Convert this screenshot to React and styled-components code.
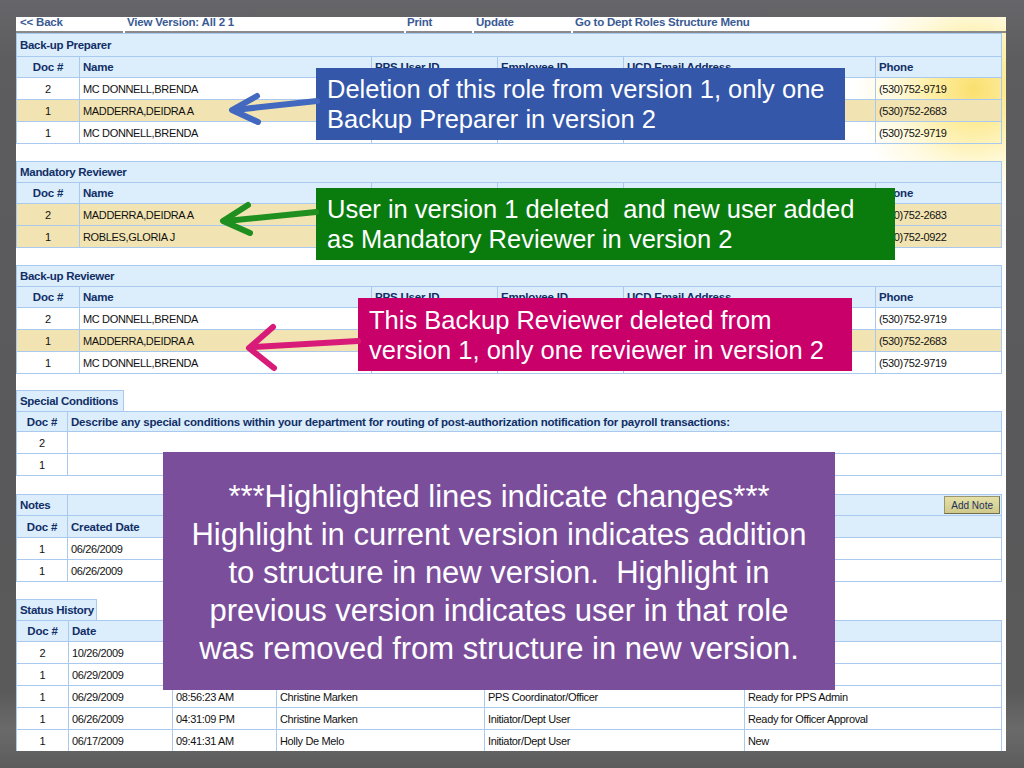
import React from 'react';
import styled, { createGlobalStyle } from 'styled-components';

const Global = createGlobalStyle`
  html, body { margin: 0; padding: 0; }
  body {
    width: 1024px; height: 768px; overflow: hidden;
    background: linear-gradient(180deg, #666569 0%, #5d5d5f 8%, #59595b 60%, #5a5a5a 90%, #6a6a6a 95%, #5c5c5c 100%);
    font-family: "Liberation Sans", Arial, sans-serif;
  }
`;

const Slide = styled.div`
  position: relative;
  width: 1024px;
  height: 768px;
  box-sizing: border-box;
  padding: 17px 18px 17px 16px;
`;

const Panel = styled.div`
  width: 990px;
  height: 734px;
  overflow: hidden;
  display: flex;
  flex-direction: column;
  background:
    radial-gradient(circle at 958px 72px, rgba(250, 220, 95, 0.9) 0, rgba(252, 230, 120, 0.7) 40px, rgba(255, 240, 160, 0.35) 80px, rgba(255, 255, 255, 0) 120px),
    #ffffff;
`;

const Nav = styled.div`
  display: grid;
  grid-template-columns: 107px 279px 66px 97px 1fr;
  column-gap: 2px;
  height: 16px;
  flex: none;
`;

const NavLink = styled.div`
  border-bottom: 2px solid #8a8a8a;
  color: #3a5a94;
  font-weight: bold;
  font-size: 11.5px;
  letter-spacing: -0.2px;
  line-height: 11px;
  padding-left: ${p => p.$pl || 3}px;
  white-space: nowrap;
  overflow: hidden;
`;

const Table = styled.div`
  width: 986px;
  flex: none;
  margin-top: ${p => p.$mt || 0}px;
`;

const Title = styled.div`
  box-sizing: border-box;
  height: ${p => p.$h || 22}px;
  background: #dcedfc;
  border: 1px solid #a9c9ee;
  color: #112f66;
  font-weight: bold;
  font-size: 11.5px;
  letter-spacing: -0.3px;
  padding-left: 3px;
  display: flex;
  align-items: center;
`;

const Tab = styled.div`
  box-sizing: border-box;
  width: ${p => p.$w}px;
  height: 21px;
  background: #dcedfc;
  border: 1px solid #a9c9ee;
  border-bottom: none;
  color: #112f66;
  font-weight: bold;
  font-size: 11.5px;
  letter-spacing: -0.3px;
  padding-left: 3px;
  display: flex;
  align-items: center;
  white-space: nowrap;
`;

const Row = styled.div`
  box-sizing: border-box;
  display: grid;
  grid-template-columns: ${p => p.$cols};
  height: ${p => p.$h || 22}px;
  border-left: 1px solid #a9c9ee;
  border-right: 1px solid #a9c9ee;
  border-bottom: 1px solid #a9c9ee;
  border-top: ${p => (p.$top ? '1px solid #a9c9ee' : 'none')};
  background: ${p => (p.$head ? '#dcedfc' : p.$hl ? '#f1e4b2' : 'transparent')};
  color: ${p => (p.$head ? '#112f66' : '#111')};
  font-weight: ${p => (p.$head ? 'bold' : 'normal')};
  font-size: ${p => (p.$head ? 11.5 : 11)}px;
  letter-spacing: ${p => (p.$head ? -0.2 : -0.35)}px;
`;

const Cell = styled.div`
  box-sizing: border-box;
  display: flex;
  align-items: center;
  justify-content: ${p => (p.$center ? 'center' : 'flex-start')};
  padding: 0 3px;
  border-right: ${p => (p.$last ? 'none' : '1px solid #a9c9ee')};
  white-space: nowrap;
  overflow: hidden;
`;

const TitleRow = styled.div`
  box-sizing: border-box;
  display: grid;
  grid-template-columns: 51px 1fr;
  height: 22px;
  border: 1px solid #a9c9ee;
  background: #dcedfc;
  color: #112f66;
  font-weight: bold;
  font-size: 11.5px;
  letter-spacing: -0.3px;
`;

const AddNote = styled.div`
  justify-self: end;
  align-self: center;
  margin-right: 1px;
  height: 16px;
  padding: 0 6px;
  display: flex;
  align-items: center;
  background: linear-gradient(#e4e0a8, #cfca8a);
  border: 1px solid #9a9670;
  border-right-color: #6f6c50;
  border-bottom-color: #6f6c50;
  color: #1d2f5a;
  font-weight: normal;
  font-size: 10px;
  letter-spacing: 0;
`;

const Callout = styled.div`
  position: absolute;
  box-sizing: border-box;
  left: ${p => p.$x}px;
  top: ${p => p.$y}px;
  width: ${p => p.$w}px;
  height: ${p => p.$h}px;
  background: ${p => p.$bg};
  color: #ffffff;
  font-family: "Liberation Sans", Arial, sans-serif;
  font-size: ${p => p.$fs}px;
  line-height: ${p => p.$lh}px;
  padding: ${p => p.$pad};
  text-align: ${p => (p.$centered ? 'center' : 'left')};
  white-space: pre;
  display: flex;
  flex-direction: column;
  justify-content: center;
  align-items: ${p => (p.$centered ? 'center' : 'flex-start')};
`;

const Overlay = styled.svg`
  position: absolute;
  left: 0;
  top: 0;
  pointer-events: none;
`;

const roleCols = '63px 292px 126px 126px 252px 1fr';
const statusCols = '52px 104px 104px 208px 260px 1fr';
const noteCols = '51px 1fr';

const RoleTable = ({ title, mt, titleH, rows, hideMid }) => (
  <Table $mt={mt}>
    <Title $h={titleH}>{title}</Title>
    <Row $cols={roleCols} $head $h={21}>
      <Cell $center>Doc #</Cell>
      <Cell>Name</Cell>
      <Cell>{hideMid ? '' : 'PPS User ID'}</Cell>
      <Cell>{hideMid ? '' : 'Employee ID'}</Cell>
      <Cell>{hideMid ? '' : 'UCD Email Address'}</Cell>
      <Cell $last>Phone</Cell>
    </Row>
    {rows.map((r, i) => (
      <Row key={i} $cols={roleCols} $hl={r.hl}>
        <Cell $center>{r.doc}</Cell>
        <Cell>{r.name}</Cell>
        <Cell />
        <Cell />
        <Cell />
        <Cell $last>{r.phone}</Cell>
      </Row>
    ))}
  </Table>
);

const preparer = [
  { doc: 2, name: 'MC DONNELL,BRENDA', phone: '(530)752-9719' },
  { doc: 1, name: 'MADDERRA,DEIDRA A', phone: '(530)752-2683', hl: true },
  { doc: 1, name: 'MC DONNELL,BRENDA', phone: '(530)752-9719' },
];
const mandatory = [
  { doc: 2, name: 'MADDERRA,DEIDRA A', phone: '(530)752-2683', hl: true },
  { doc: 1, name: 'ROBLES,GLORIA J', phone: '(530)752-0922', hl: true },
];
const backupRev = [
  { doc: 2, name: 'MC DONNELL,BRENDA', phone: '(530)752-9719' },
  { doc: 1, name: 'MADDERRA,DEIDRA A', phone: '(530)752-2683', hl: true },
  { doc: 1, name: 'MC DONNELL,BRENDA', phone: '(530)752-9719' },
];
const history = [
  ['2', '10/26/2009', '', '', '', ''],
  ['1', '06/29/2009', '', '', '', ''],
  ['1', '06/29/2009', '08:56:23 AM', 'Christine Marken', 'PPS Coordinator/Officer', 'Ready for PPS Admin'],
  ['1', '06/26/2009', '04:31:09 PM', 'Christine Marken', 'Initiator/Dept User', 'Ready for Officer Approval'],
  ['1', '06/17/2009', '09:41:31 AM', 'Holly De Melo', 'Initiator/Dept User', 'New'],
];

const arrows = [
  { color: '#4268bf', shaft: '317,101 234,110', head: '257,96 232,110 258,122' },
  { color: '#1f8f1f', shaft: '316,212 226,221', head: '248,205 223,221 250,233' },
  { color: '#d81b78', shaft: '358,341 252,347', head: '273,327 249,348 274,368' },
];

export default function App() {
  return (
    <Slide>
      <Global />
      <Panel>
        <Nav>
          <NavLink $pl={4}>&lt;&lt; Back</NavLink>
          <NavLink $pl={2}>View Version: All 2 1</NavLink>
          <NavLink $pl={1}>Print</NavLink>
          <NavLink $pl={2}>Update</NavLink>
          <NavLink $pl={2}>Go to Dept Roles Structure Menu</NavLink>
        </Nav>

        <RoleTable title="Back-up Preparer" titleH={24} rows={preparer} />
        <RoleTable title="Mandatory Reviewer" mt={17} rows={mandatory} hideMid />
        <RoleTable title="Back-up Reviewer" mt={17} rows={backupRev} />

        <Table $mt={16}>
          <Tab $w={108}>Special Conditions</Tab>
          <Row $cols={noteCols} $head $top $h={21}>
            <Cell $center>Doc #</Cell>
            <Cell $last>Describe any special conditions within your department for routing of post-authorization notification for payroll transactions:</Cell>
          </Row>
          <Row $cols={noteCols}>
            <Cell $center>2</Cell>
            <Cell $last />
          </Row>
          <Row $cols={noteCols}>
            <Cell $center>1</Cell>
            <Cell $last />
          </Row>
        </Table>

        <Table $mt={18}>
          <TitleRow>
            <Cell>Notes</Cell>
            <AddNote>Add Note</AddNote>
          </TitleRow>
          <Row $cols={noteCols} $head>
            <Cell $center>Doc #</Cell>
            <Cell $last>Created Date</Cell>
          </Row>
          <Row $cols={noteCols}>
            <Cell $center>1</Cell>
            <Cell $last>06/26/2009</Cell>
          </Row>
          <Row $cols={noteCols}>
            <Cell $center>1</Cell>
            <Cell $last>06/26/2009</Cell>
          </Row>
        </Table>

        <Table $mt={17}>
          <Tab $w={81}>Status History</Tab>
          <Row $cols={statusCols} $head $top>
            <Cell $center>Doc #</Cell>
            <Cell>Date</Cell>
            <Cell />
            <Cell />
            <Cell />
            <Cell $last />
          </Row>
          {history.map((r, i) => (
            <Row key={i} $cols={statusCols}>
              <Cell $center>{r[0]}</Cell>
              <Cell>{r[1]}</Cell>
              <Cell>{r[2]}</Cell>
              <Cell>{r[3]}</Cell>
              <Cell>{r[4]}</Cell>
              <Cell $last>{r[5]}</Cell>
            </Row>
          ))}
        </Table>
      </Panel>

      <Callout $x={316} $y={68} $w={529} $h={72} $bg="#3457aa" $fs={25.5} $lh={30} $pad="0 0 0 11px">
        <span>Deletion of this role from version 1, only one</span>
        <span>Backup Preparer in version 2</span>
      </Callout>
      <Callout $x={316} $y={188} $w={579} $h={72} $bg="#0a7c0e" $fs={25.5} $lh={30} $pad="0 0 0 11px">
        <span>User in version 1 deleted  and new user added</span>
        <span>as Mandatory Reviewer in version 2</span>
      </Callout>
      <Callout $x={358} $y={298} $w={494} $h={73} $bg="#c9006a" $fs={25.5} $lh={30} $pad="0 0 0 11px">
        <span>This Backup Reviewer deleted from</span>
        <span>version 1, only one reviewer in version 2</span>
      </Callout>
      <Callout $x={163} $y={452} $w={672} $h={238} $bg="#7b4e9b" $fs={31} $lh={38} $pad="3px 0 0 0" $centered>
        <span>***Highlighted lines indicate changes***</span>
        <span>Highlight in current version indicates addition</span>
        <span>to structure in new version.  Highlight in</span>
        <span>previous version indicates user in that role</span>
        <span>was removed from structure in new version.</span>
      </Callout>

      <Overlay width="1024" height="768" viewBox="0 0 1024 768">
        {arrows.map((a, i) => (
          <g key={i} fill="none" stroke={a.color} strokeWidth="6" strokeLinecap="round" strokeLinejoin="round">
            <polyline points={a.shaft} />
            <polyline points={a.head} />
          </g>
        ))}
      </Overlay>
    </Slide>
  );
}
